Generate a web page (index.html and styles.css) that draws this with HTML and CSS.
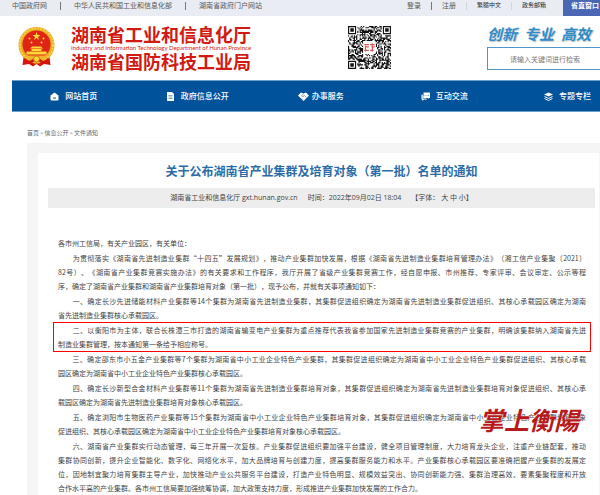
FILE: index.html
```html
<!DOCTYPE html>
<html lang="zh-CN">
<head>
  <meta charset="UTF-8">
  <meta name="viewport" content="width=device-width, initial-scale=1.0">
  <title>湖南省工业和信息化厅</title>
  <link rel="stylesheet" href="styles.css">
</head>
<body>
  <div class="topbar">
    <div class="top-links">
      <a href="#">中国政府网</a>
      <span class="sep"></span>
      <a href="#">中华人民共和国工业和信息化部</a>
      <span class="sep"></span>
      <a href="#">湖南省政府门户网站</a>
    </div>
    <div class="top-user">
      <a href="#">登录</a>
      <span class="sep"></span>
      <a href="#">注册</a>
      <span class="sep light"></span>
      <a href="#" class="dark">繁體中文</a>
      <span class="sep light"></span>
      <a href="#" class="dark">政务邮箱</a>
    </div>
    <button type="button" class="window-button">省直窗口</button>
  </div>

  <header class="header">
    <svg class="emblem" viewBox="0 0 74 80" aria-hidden="true">
      <path d="M12 54L9 76L22 74L30 79L37 74L44 79L52 74L65 76L62 54Z" fill="#d3160f"/>
      <circle cx="37" cy="36" r="36" fill="#e8a820"/>
      <circle cx="37" cy="36" r="33" fill="none" stroke="#f8d04c" stroke-width="4" stroke-dasharray="4 2"/>
      <circle cx="37" cy="35" r="28" fill="#e02415"/>
      <path d="M37 10L39 16L45 16L40 20L42 26L37 22L32 26L34 20L29 16L35 16Z" fill="#ffd83a"/>
      <g fill="#ffd83a">
        <circle cx="23" cy="23" r="2"/><circle cx="27" cy="31" r="2"/>
        <circle cx="51" cy="23" r="2"/><circle cx="47" cy="31" r="2"/>
        <path d="M24 43L28 39H46L50 43ZM27 44H47V48H27ZM17 49H57V55H17Z"/>
      </g>
      <path d="M15 57H59L54 66H45L43 73H31L29 66H20Z" fill="#f0b52b"/>
      <circle cx="37" cy="64" r="6" fill="#ffd83a" stroke="#cc7b13" stroke-width="2"/>
      <path d="M13 64Q22 75 31 66M61 64Q52 75 43 66" fill="none" stroke="#d3160f" stroke-width="5"/>
    </svg>
    <div class="site-name">
      <div class="dept">湖南省工业和信息化厅</div>
      <div class="dept-en">Industry and Information Technology Department of Hunan Province</div>
      <div class="dept">湖南省国防科技工业局</div>
    </div>
    <svg class="qr" id="qr" viewBox="0 0 37 37" role="img" aria-label="二维码">
      <path id="qrDots" fill="#111"/>
      <rect x="13" y="13" width="11" height="11" rx="1" fill="#fff"/>
      <path d="M14 16H18M19 16H23M15 18H18M20 18H23M14 21H18M19 21H22M15 17V22M21 15V22" stroke="#e0595a" stroke-width="1"/>
    </svg>
    <div class="header-right">
      <div class="slogan"><span>创新</span><span>专业</span><span>高效</span></div>
      <input class="search" type="text" placeholder="请输入关键词进行检索" aria-label="检索">
    </div>
  </header>

  <nav class="nav">
    <a href="#">
      <svg viewBox="0 0 18 18"><path d="M9 1L17 7V15Q17 17 15 17H3Q1 17 1 15V7Z" fill="#fff"/><path d="M6 12H12" stroke="#00529b" stroke-width="2"/></svg>
      网站首页
    </a>
    <a href="#">
      <svg viewBox="0 0 18 18"><path d="M2 0H12L16 4V18H2Z" fill="#fff"/><path d="M5 7H13M5 10H13M5 13H13" stroke="#00529b" stroke-width="1"/></svg>
      政府信息公开
    </a>
    <a href="#" class="wide-icon">
      <svg viewBox="0 0 22 18"><path d="M0 7L6 1L11 3L16 1L22 7L11 18Z" fill="#fff"/><path d="M11 3L7 8L10 9L13 7L17 11M10 15L8 13" fill="none" stroke="#00529b" stroke-width="1"/></svg>
      办事服务
    </a>
    <a href="#">
      <svg viewBox="0 0 18 18"><path d="M5 1H18V12H16L14 14V12H5Z" fill="#fff"/><path d="M3 5H1V15H3V18L6 15H12V14" fill="#fff"/><path d="M4 4V13H12M8 6V8M12 6V8M15 6V8" fill="none" stroke="#00529b" stroke-width="1"/></svg>
      互动交流
    </a>
    <a href="#">
      <svg viewBox="0 0 18 18"><path d="M9 1L18 5L9 9L0 5Z" fill="#fff"/><path d="M1 9L9 13L17 9M1 13L9 17L17 13" fill="none" stroke="#fff" stroke-width="2"/></svg>
      专题专栏
    </a>
  </nav>

  <div class="breadcrumb">
    <a href="#">首页</a><span>&gt;</span><a href="#">信息公开</a><span>&gt;</span><a href="#">文件通知</a>
  </div>

  <main class="panel">
    <article class="card">
      <h1>关于公布湖南省产业集群及培育对象（第一批）名单的通知</h1>
      <div class="meta">
        <span>湖南省工业和信息化厅 gxt.hunan.gov.cn</span>
        <span>时间：2022年09月02日 18:04</span>
        <span>【字体： 大 中 小】</span>
      </div>
      <div class="content">
        <p>各市州工信局，有关产业园区，有关单位：</p>
        <p>
          <span class="line">　　为贯彻落实《湖南省先进制造业集群“十四五”发展规划》，推动产业集群加快发展，根据《湖南省先进制造业集群培育管理办法》（湘工信产业集聚〔2021〕</span>
          <span class="line">82号）、《湖南省产业集群竞赛实施办法》的有关要求和工作程序，我厅开展了省级产业集群竞赛工作，经自愿申报、市州推荐、专家评审、会议审定、公示等程</span>
          序，确定了湖南省产业集群和湖南省产业集群培育对象（第一批），现予公布，并就有关事项通知如下：
        </p>
        <p>
          <span class="line">　　一、确定长沙先进储能材料产业集群等14个集群为湖南省先进制造业集群，其集群促进组织确定为湖南省先进制造业集群促进组织、其核心承载园区确定为湖南</span>
          省先进制造业集群核心承载园区。
        </p>
        <p class="marked">
          <span class="line">　　二、以衡阳市为主体，联合长株潭三市打造的湖南省输变电产业集群为重点推荐代表我省参加国家先进制造业集群竞赛的产业集群，明确该集群纳入湖南省先进</span>
          制造业集群管理，按本通知第一条给予相应称号。
        </p>
        <p>
          <span class="line">　　三、确定邵东市小五金产业集群等7个集群为湖南省中小工业企业特色产业集群，其集群促进组织确定为湖南省中小工业企业特色产业集群促进组织、其核心承载</span>
          园区确定为湖南省中小工业企业特色产业集群核心承载园区。
        </p>
        <p>
          <span class="line">　　四、确定长沙新型合金材料产业集群等11个集群为湖南省先进制造业集群培育对象，其集群促进组织确定为湖南省先进制造业集群培育对象促进组织、其核心承</span>
          载园区确定为湖南省先进制造业集群培育对象核心承载园区。
        </p>
        <p>
          <span class="line">　　五、确定浏阳市生物医药产业集群等15个集群为湖南省中小工业企业特色产业集群培育对象，其集群促进组织确定为湖南省中小工业企业特色产业集群培育对象</span>
          促进组织、其核心承载园区确定为湖南省中小工业企业特色产业集群培育对象核心承载园区。
        </p>
        <p>
          <span class="line">　　六、湖南省产业集群实行动态管理，每三年开展一次复核。产业集群促进组织要加强平台建设，健全项目管理制度，大力培育龙头企业，注重产业链配套，推动</span>
          <span class="line">集群协同创新，提升企业智能化、数字化、网络化水平，加大品牌培育与创建力度，提高集群服务能力和水平。产业集群核心承载园区要准确把握产业集群的发展定</span>
          <span class="line">位，因地制宜聚力培育集群主导产业，加快推动产业公共服务平台建设，打造产业特色明显、规模效益突出、协同创新能力强、集群治理高效、要素集聚程度和开放</span>
          合作水平高的产业集群。各市州工信局要加强统筹协调，加大政策支持力度，形成推进产业集群加快发展的工作合力。
        </p>
        <div class="watermark">掌上衡陽</div>
      </div>
    </article>
  </main>
  <script src="script.js"></script>
</body>
</html>
```
FILE: styles.css
```css
* {
  box-sizing: border-box;
}
body {
  margin: 0;
  background: #fff;
  color: #444;
  font-family: "Open Sans", "Noto Sans CJK SC", sans-serif;
  font-size: 7px;
  line-height: 14px;
  text-spacing-trim: space-all;
  overflow-x: hidden;
}
a {
  color: inherit;
  text-decoration: none;
}

/* top bar */
.topbar {
  display: flex;
  height: 16px;
  padding-left: 12px;
  background: #e9edf3;
  line-height: 11px;
  white-space: nowrap;
}
.top-links,
.top-user {
  display: flex;
  color: #555;
}
.top-links {
  flex: 1;
  gap: 13px;
}
.top-user {
  gap: 10px;
  padding-right: 17px;
}
.top-user .dark {
  color: #222;
  font-size: 6px;
}
.sep {
  width: 1px;
  height: 8px;
  margin-top: 2px;
  background: #777;
}
.sep.light {
  background: #d3d7dd;
}
.window-button {
  width: 37px;
  padding: 0 0 5px 8px;
  border: 0;
  background: #4b66b3;
  color: #fff;
  font: bold 7px/11px "Noto Sans CJK SC", sans-serif;
  text-align: left;
  white-space: nowrap;
  overflow: hidden;
}

/* header */
.header {
  display: flex;
  height: 64px;
  padding: 10px 0 0 18px;
}
.emblem {
  width: 37px;
  height: 40px;
  margin-top: 1px;
}
.site-name {
  flex: 1;
  padding-left: 16px;
  color: #d01a12;
  white-space: nowrap;
}
.dept {
  font-family: "Noto Sans CJK SC", sans-serif;
  font-size: 18px;
  font-weight: bold;
  line-height: 17px;
}
.dept-en {
  font-family: Lato, sans-serif;
  font-size: 6px;
  line-height: 10px;
}
.qr {
  width: 43px;
  height: 43px;
}
.header-right {
  width: 113px;
  margin-left: 96px;
}
.slogan {
  display: flex;
  gap: 7px;
  color: #2f8cc8;
  font-family: "Noto Sans CJK SC", sans-serif;
  font-size: 15px;
  font-style: italic;
  font-weight: bold;
  line-height: 16px;
  text-shadow: 1px 1px 1px #ccc;
  white-space: nowrap;
}
.search {
  display: block;
  width: 100%;
  height: 23px;
  margin-top: 5px;
  padding: 0 0 0 22px;
  border: 1px solid #4f97cb;
  border-right: 0;
  background: #fff;
  font: 7px "Noto Sans CJK SC", sans-serif;
}
.search::placeholder {
  color: #777;
}

/* navigation */
.nav {
  display: flex;
  height: 32px;
  margin-left: 12px;
  border-top: 1px solid #6f9fc9;
  border-bottom: 1px solid #6f9fc9;
  background: #00529b;
  overflow: hidden;
}
.nav a {
  display: flex;
  flex: 0 0 21%;
  align-items: center;
  justify-content: center;
  gap: 6px;
  color: #fff;
  font-size: 8px;
  font-weight: 500;
  white-space: nowrap;
}
.nav svg {
  width: 9px;
  height: 9px;
}
.nav .wide-icon {
  gap: 3px;
}
.nav .wide-icon svg {
  width: 11px;
}

.breadcrumb {
  padding: 14px 0 3px 27px;
  color: #666;
  font-size: 6px;
}
.breadcrumb span {
  margin: 0 1px;
}

/* article */
.panel {
  margin-left: 27px;
  padding: 10px 1px 0 11px;
  background: #f5f5f5;
}
.card {
  padding: 9px 4px 0 10px;
  background: #fff;
}
h1 {
  margin: 0;
  color: #2b6ca8;
  font-family: "Noto Sans CJK SC", sans-serif;
  font-size: 12px;
  font-weight: bold;
  line-height: 18px;
  text-align: center;
}
.meta {
  display: flex;
  justify-content: center;
  gap: 10px;
  margin-top: 8px;
  background: #ededed;
  line-height: 20px;
}
.content {
  position: relative;
  padding: 28px 9px 0 10px;
  font-family: "Noto Sans CJK SC", sans-serif;
  text-align: justify;
}
.content p {
  margin: 0 0 1px;
}
.line {
  display: block;
  text-align-last: justify;
}
.content .marked {
  margin: 0 -4px 1px;
  padding: 0 4px;
  outline: 1px solid #f00;
}
.watermark {
  position: absolute;
  right: 16px;
  bottom: 60px;
  color: #b8191a;
  font-family: "Noto Sans CJK TC", sans-serif;
  font-size: 25px;
  font-style: italic;
  font-weight: bold;
  line-height: 32px;
  text-shadow: 0 0 1px #fff;
}
```
FILE: script.js
```js
// fill the QR code grid: three finder squares plus data modules
const size = 37;
let seed = 20220902;
let d = '';

function finder(x, y) {
  const corners = [[0, 0], [size - 7, 0], [0, size - 7]];
  for (const [cx, cy] of corners) {
    const dx = x - cx;
    const dy = y - cy;
    if (dx >= -1 && dx <= 7 && dy >= -1 && dy <= 7) {
      const ring = Math.max(Math.abs(dx - 3), Math.abs(dy - 3));
      return ring === 3 || ring < 2 ? 1 : 0;
    }
  }
  return -1;
}

for (let y = 0; y < size; y++) {
  for (let x = 0; x < size; x++) {
    seed = (seed * 1103515 + 12345) % 2147483648;
    const f = finder(x, y);
    if (f === 1 || (f === -1 && seed / 2147483648 > 0.45)) {
      d += `M${x} ${y}h1v1h-1z`;
    }
  }
}
document.getElementById('qrDots').setAttribute('d', d);
```
